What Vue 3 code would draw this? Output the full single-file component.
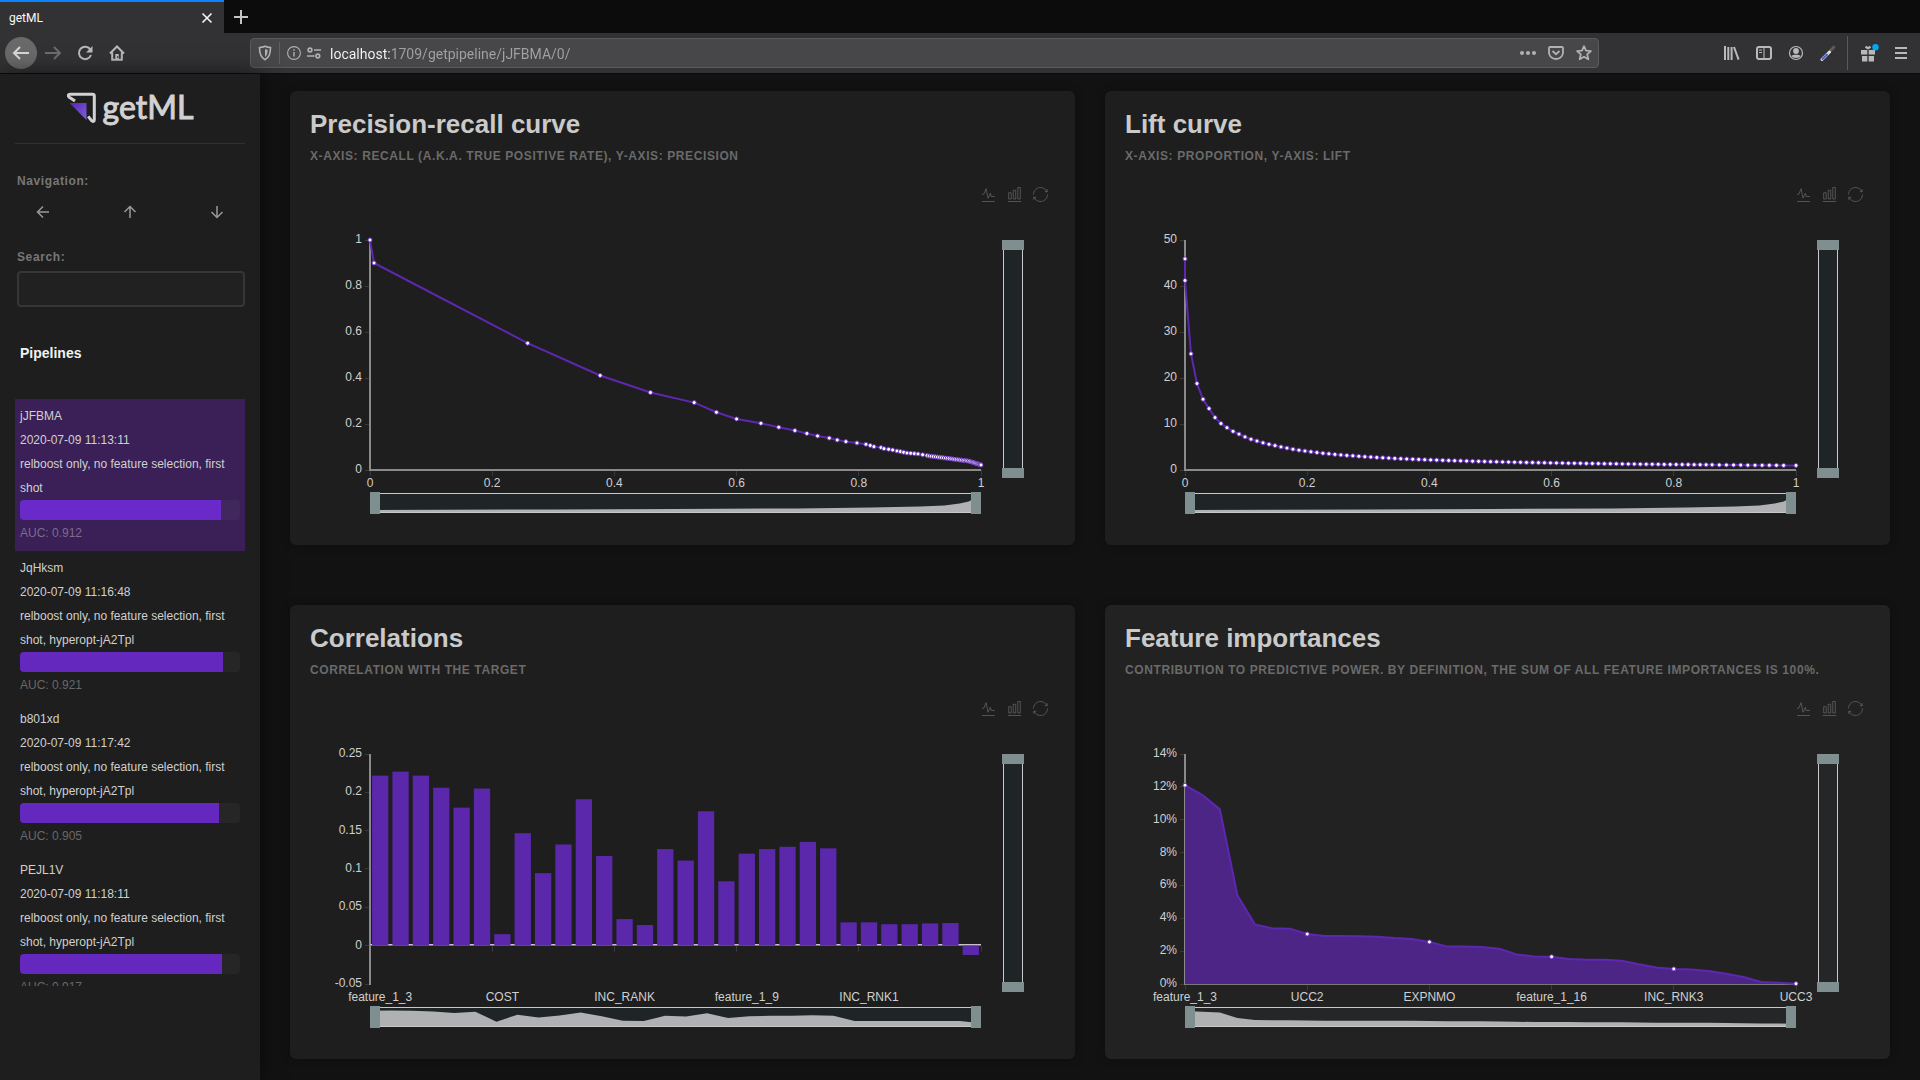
<script setup>
import { ref, computed } from 'vue'

const search = ref('')
const address = ref('localhost:1709/getpipeline/jJFBMA/0/')

const pipelines = [
  { id: 'jJFBMA', date: '2020-07-09 11:13:11', tags: 'relboost only, no feature selection, first shot', auc: 0.912 },
  { id: 'JqHksm', date: '2020-07-09 11:16:48', tags: 'relboost only, no feature selection, first shot, hyperopt-jA2Tpl', auc: 0.921 },
  { id: 'b801xd', date: '2020-07-09 11:17:42', tags: 'relboost only, no feature selection, first shot, hyperopt-jA2Tpl', auc: 0.905 },
  { id: 'PEJL1V', date: '2020-07-09 11:18:11', tags: 'relboost only, no feature selection, first shot, hyperopt-jA2Tpl', auc: 0.917 }
]
const selected = ref('jJFBMA')
const visiblePipelines = computed(() =>
  pipelines.filter(p => (p.id + p.tags).toLowerCase().includes(search.value.toLowerCase()))
)

// Plot area inside each chart's drawing
const X0 = 80
const X1 = 691
const Y0 = 38
const Y1 = 268
const sx = t => X0 + t * (X1 - X0)
const sy = (v, min, max) => Y1 - ((v - min) / (max - min)) * (Y1 - Y0)
const join = pts => pts.map(p => p[0].toFixed(2) + ',' + p[1].toFixed(2)).join(' ')
const numberTicks = [0, 0.2, 0.4, 0.6, 0.8, 1].map(v => ({ x: sx(v), label: String(v) }))

// Precision-recall
const prData = [
  [0, 1], [0.0066, 0.9], [0.258, 0.5515], [0.3767, 0.411], [0.459, 0.337], [0.5306, 0.293],
  [0.567, 0.251], [0.6, 0.222], [0.6398, 0.203], [0.669, 0.186], [0.6954, 0.1714], [0.715, 0.1589],
  [0.7325, 0.148], [0.7516, 0.1387], [0.7647, 0.1306], [0.7789, 0.1234], [0.797, 0.1176],
  [0.8117, 0.1118], [0.8188, 0.1067], [0.8248, 0.1016], [0.8363, 0.0973], [0.8412, 0.0929],
  [0.8488, 0.09], [0.8554, 0.0871], [0.8625, 0.0828], [0.868, 0.08], [0.8734, 0.077],
  [0.8789, 0.0741], [0.8849, 0.0727], [0.8909, 0.0712], [0.8969, 0.07], [0.9045, 0.0665], [0.9116, 0.063]
]
for (let i = 1; i <= 34; i++) {
  const t = i / 34
  const x = 0.9116 + 0.0884 * (1 - Math.pow(1 - t, 1.35))
  prData.push([x, 0.062 - 0.34 * (x - 0.9116) - (x > 0.98 ? 0.5 * (x - 0.98) : 0)])
}

// Lift
const liftData = [
  [0, 45.9], [0, 41.2], [0.0098, 25.25], [0.0196, 18.8], [0.0295, 15.4], [0.0393, 13.35], [0.0491, 11.4],
  [0.0589, 10.1], [0.0687, 9.2], [0.0786, 8.4], [0.0884, 7.8], [0.0982, 7.2], [0.108, 6.7],
  [0.1178, 6.3], [0.1277, 5.9], [0.1375, 5.6], [0.1473, 5.3]
]
for (let x = 0.1571; x <= 1.001; x += x < 0.86 ? 0.0098 : 0.0117) {
  liftData.push([Math.min(x, 1), 4.06 * Math.pow(x / 0.2, -0.88)])
}
liftData[liftData.length - 1][0] = 1

// Correlations
const correlations = [
  0.2218, 0.227, 0.2218, 0.206, 0.18, 0.205, 0.015, 0.1467, 0.0946, 0.132, 0.191, 0.117, 0.0347, 0.0269,
  0.126, 0.111, 0.1753, 0.084, 0.12, 0.126, 0.129, 0.1354, 0.127, 0.0304, 0.0304, 0.028, 0.028, 0.029,
  0.0295, -0.0122
]
const band = (X1 - X0) / correlations.length
const zeroY = sy(0, -0.05, 0.25)
const bars = correlations.map((v, i) => {
  const y = sy(v, -0.05, 0.25)
  return { x: X0 + i * band + band * 0.1, y: Math.min(y, zeroY), width: band * 0.8, height: Math.abs(y - zeroY) }
})

// Feature importances, in percent
const importances = [
  12.1, 11.5, 10.63, 5.4, 3.63, 3.39, 3.37, 3.04, 2.92, 2.92, 2.9, 2.87, 2.8, 2.74, 2.56, 2.29, 2.28, 2.25,
  2.15, 1.8, 1.68, 1.66, 1.52, 1.48, 1.48, 1.42, 1.2, 1.01, 0.92, 0.89, 0.79, 0.63, 0.43, 0.12, 0.08, 0.02
]
const importancePoints = importances.map((v, i) => [sx(i / 35), sy(v, 0, 14)])

const curveShadow = [
  [0, 308], [0.3, 307.5], [0.5, 307], [0.7, 306.4], [0.82, 305.6], [0.9, 304.6], [0.94, 303.4],
  [0.965, 301.6], [0.98, 299.4], [0.988, 296.6], [1, 293]
].map(([t, y]) => [sx(t), y])

const closeShadow = pts => join([[X0, 311], ...pts, [X1, 311]])

const yTicks = (values, min, max, suffix = '') =>
  values.map(v => ({ y: sy(v, min, max), label: v + suffix }))

const prPoints = prData.map(([x, y]) => [sx(x), sy(y, 0, 1)])
const liftPoints = liftData.map(([x, y]) => [sx(x), sy(y, 0, 50)])

const charts = [
  {
    key: 'pr', title: 'Precision-recall curve',
    subtitle: 'X-axis: Recall (a.k.a. true positive rate), Y-axis: Precision',
    yTicks: yTicks([0, 0.2, 0.4, 0.6, 0.8, 1], 0, 1), xTicks: numberTicks.map(t => t.x), xLabels: numberTicks,
    axisY: Y1, line: prPoints, symbols: prPoints, shadow: closeShadow(curveShadow)
  },
  {
    key: 'lift', title: 'Lift curve', subtitle: 'X-axis: Proportion, Y-axis: Lift',
    yTicks: yTicks([0, 10, 20, 30, 40, 50], 0, 50), xTicks: numberTicks.map(t => t.x), xLabels: numberTicks,
    axisY: Y1, line: liftPoints, symbols: liftPoints, shadow: closeShadow(curveShadow)
  },
  {
    key: 'corr', title: 'Correlations', subtitle: 'Correlation with the target',
    yTicks: yTicks([-0.05, 0, 0.05, 0.1, 0.15, 0.2, 0.25], -0.05, 0.25),
    xTicks: [0, 0.2, 0.4, 0.6, 0.8, 1].map(sx),
    xLabels: ['feature_1_3', 'COST', 'INC_RANK', 'feature_1_9', 'INC_RNK1'].map((label, i) => ({
      x: X0 + (i * 6 + 0.5) * band, label
    })),
    axisY: zeroY, bars, thinAxis: true,
    shadow: closeShadow(correlations.map((v, i) => [sx(i / 29), 306.5 - 53 * v]))
  },
  {
    key: 'imp', title: 'Feature importances', active: true,
    subtitle: 'Contribution to predictive power. By definition, the sum of all feature importances is 100%.',
    yTicks: yTicks([0, 2, 4, 6, 8, 10, 12, 14], 0, 14, '%'),
    xTicks: [0, 0.2, 0.4, 0.6, 0.8, 1].map(sx),
    xLabels: ['feature_1_3', 'UCC2', 'EXPNMO', 'feature_1_16', 'INC_RNK3', 'UCC3'].map((label, i) => ({
      x: sx(i / 5), label
    })),
    axisY: Y1, line: importancePoints, area: join([[X0, Y1], ...importancePoints, [X1, Y1]]),
    symbols: importancePoints.filter((p, i) => i % 7 === 0), thinAxis: true,
    shadow: closeShadow(importances.map((v, i) => [sx(i / 35), 307.7 - 1.05 * v]))
  }
]

const tools = [
  { name: 'Line', path: 'M4.1,28.9h7.1l9.3-22l7.4,38l9.7-19.7l3,12.8h14.9M4.1,58h51.4' },
  { name: 'Bars', path: 'M6.7,22.9h10V48h-10V22.9zM24.9,13h10v35h-10V13zM43.2,2h10v46h-10V2zM3.1,58h53.7' },
  {
    name: 'Restore',
    path: 'M47,18.9h9.8V8.7M56.3,20.1C52.1,9,40.5,0.6,26.8,2.1C12.6,3.7,1.6,16.2,2.1,30.6M13,41.1H3.1v10.2M3.7,39.9c4.2,11.1,15.8,19.5,29.5,18c14.2-1.6,25.2-14.1,24.7-28.5'
  }
]
</script>

<template>
  <div class="window">
    <header class="browser">
      <div class="tabs">
        <div class="tab">
          <span>getML</span>
          <button class="plain close" aria-label="Close tab">
            <svg width="12" height="12" viewBox="0 0 12 12"><path d="M1.5 1.5l9 9M10.5 1.5l-9 9" stroke="#f5f5f5" stroke-width="1.6" fill="none" /></svg>
          </button>
        </div>
        <button class="plain new-tab" aria-label="New tab">
          <svg width="16" height="16" viewBox="0 0 16 16"><path d="M8 1v14M1 8h14" stroke="#c4c4c4" stroke-width="2" fill="none" /></svg>
        </button>
      </div>
      <div class="toolbar">
        <nav class="group">
          <button class="plain tool back" aria-label="Back">
            <svg width="18" height="18" viewBox="0 0 18 18"><path d="M17 9H2M8 3L2 9l6 6" class="stroke" stroke-width="2" /></svg>
          </button>
          <button class="plain tool dim" aria-label="Forward">
            <svg width="18" height="18" viewBox="0 0 18 18"><path d="M1 9h15M10 3l6 6-6 6" class="stroke" stroke-width="2" /></svg>
          </button>
          <button class="plain tool" aria-label="Reload">
            <svg width="16" height="16" viewBox="0 0 16 16"><path d="M13.4 4.6A6.2 6.2 0 1 0 14 10" class="stroke" stroke-width="2" /><path d="M15.5 1v6.5H9z" class="fill" /></svg>
          </button>
          <button class="plain tool" aria-label="Home">
            <svg width="16" height="16" viewBox="0 0 16 16"><path d="M1 8.5L8 1.5l7 7M3.2 7.5v7.3h9.6V7.5" class="stroke" stroke-width="2" /><path d="M6.3 9h3.4v5.5H6.3z" class="fill" /><path d="M8.2 11h.9v2h-.9z" fill="#323234" /></svg>
          </button>
        </nav>
        <div class="url">
          <svg width="14" height="16" viewBox="0 0 14 16"><path d="M7 1.3c2 1 4 1.2 5.5 1.2 0 5.5-.8 9.8-5.5 12.2C2.3 12.3 1.5 8 1.5 2.5 3 2.5 5 2.3 7 1.3z" class="stroke" stroke-width="1.6" /><path d="M7 4v8c2-1.5 2.6-4 2.7-7.3C8.700 4.600 7.800 4.400 7 4z" class="fill" /></svg>
          <i class="rule"></i>
          <svg width="14" height="14" viewBox="0 0 14 14"><circle cx="7" cy="7" r="6.4" class="stroke" stroke-width="1.1" /><path d="M7 6v4.500M7 3.300v1.500" class="stroke" stroke-width="1.4" /></svg>
          <svg class="perm" width="14" height="12" viewBox="0 0 14 12"><g class="stroke" stroke-width="1.6"><circle cx="3" cy="3" r="1.9" /><path d="M7 3h7M0 9h7.500" /><circle cx="10.8" cy="9" r="1.9" /></g></svg>
          <input v-model="address" class="address" type="text" aria-label="Address" spellcheck="false" />
          <button class="plain page" aria-label="Page actions">
            <svg width="16" height="4" viewBox="0 0 16 4"><g class="fill"><circle cx="2" cy="2" r="2" /><circle cx="8" cy="2" r="2" /><circle cx="14" cy="2" r="2" /></g></svg>
          </button>
          <button class="plain page" aria-label="Save to Pocket">
            <svg width="16" height="14" viewBox="0 0 16 14"><path d="M2 1h12a1 1 0 0 1 1 1v4.5a7 6.5 0 0 1-14 0V2a1 1 0 0 1 1-1zM4.5 5L8 8.2 11.5 5" class="stroke" stroke-width="1.8" /></svg>
          </button>
          <button class="plain page" aria-label="Bookmark">
            <svg width="16" height="16" viewBox="0 0 16 16"><path d="M8 1.2l2 4.400 4.900.5-3.700 3.300 1.100 4.900L8 11.800l-4.300 2.500 1.100-4.900L1.100 6.100 6 5.600z" class="stroke" stroke-width="1.8" stroke-linejoin="round" /></svg>
          </button>
        </div>
        <div class="group">
          <button class="plain tool" aria-label="Library">
            <svg width="16" height="14" viewBox="0 0 16 14"><path d="M1 0v14M4.300 1v13M7.600 1v13M10 1l4.600 12.700" class="stroke" stroke-width="2" /></svg>
          </button>
          <button class="plain tool" aria-label="Sidebars">
            <svg width="16" height="14" viewBox="0 0 16 14"><rect x="1" y="1" width="14" height="12" rx="2" class="stroke" stroke-width="2" /><path d="M8 1v12M3 4h3M3 6.500h3" class="stroke" stroke-width="1.1" /></svg>
          </button>
          <button class="plain tool" aria-label="Account">
            <svg width="16" height="16" viewBox="0 0 16 16"><circle cx="8" cy="8" r="6.5" class="stroke" stroke-width="1.2" /><circle cx="8" cy="6" r="2.9" class="fill" /><path d="M3.400 11c1-1.800 8.200-1.800 9.200 0-1 2.500-8.200 2.500-9.200 0z" class="fill" /></svg>
          </button>
          <button class="plain tool" aria-label="Color picker">
            <svg width="16" height="16" viewBox="0 0 16 16"><path d="M10 6l3.800-3.800" stroke="#5c5c5c" stroke-width="3" stroke-linecap="round" /><path d="M2 14.500L9.500 7" stroke="#ddd" stroke-width="3" stroke-linecap="round" /><path d="M2.500 14L7 9.500" stroke="#3f62d8" stroke-width="2" stroke-linecap="round" /></svg>
          </button>
          <i class="divider"></i>
          <button class="plain tool" aria-label="What's new">
            <svg width="20" height="18" viewBox="0 0 20 18"><path d="M2 6h6.300v4.500H2zM9.700 6H16v4.500H9.700zM3 12h5.300v5.500H3zM9.700 12H15v5.500H9.700z" class="fill" /><path d="M6.500 2.800L9 4.300l2.500-1.500" class="stroke" stroke-width="2.2" /><circle cx="16.500" cy="3.3" r="3.2" fill="#00a8f5" /></svg>
          </button>
          <button class="plain tool" aria-label="Menu">
            <svg width="12" height="12" viewBox="0 0 12 12"><path d="M0 1h12M0 6h12M0 11h12" class="stroke" stroke-width="2" /></svg>
          </button>
        </div>
      </div>
    </header>

    <div class="body">
      <aside class="sidebar">
        <a class="logo" href="#" aria-label="getML home">
          <svg width="30" height="32" viewBox="0 0 30 32">
            <defs>
              <linearGradient id="mark" x1="0" y1="0" x2="1" y2="1">
                <stop offset="0" stop-color="#5a22b4" />
                <stop offset="1" stop-color="#7d62dc" />
              </linearGradient>
            </defs>
            <path d="M8 9L2.300 5.200C.6 4 1 2.300 3 2.300h22.500a1.800 1.800 0 0 1 1.800 1.800v23.600c0 1.900-1.500 2.300-2.800.9l-3.300-4.200" fill="none" stroke="#d2d2d2" stroke-width="3" />
            <path d="M2.500 11H19.500V28z" fill="url(#mark)" />
          </svg>
          <span class="wordmark">getML</span>
        </a>
        <hr class="line" />
        <p class="label nav-label">Navigation:</p>
        <div class="arrows">
          <button class="plain arrow" aria-label="Back"><svg width="14" height="14" viewBox="0 0 14 14"><path d="M13 7H1.5M7 1.5L1.5 7 7 12.5" /></svg></button>
          <button class="plain arrow" aria-label="Up"><svg width="14" height="14" viewBox="0 0 14 14"><path d="M7 13V1.5M1.5 7L7 1.5 12.5 7" /></svg></button>
          <button class="plain arrow" aria-label="Down"><svg width="14" height="14" viewBox="0 0 14 14"><path d="M7 1v11.5M1.5 7L7 12.5 12.5 7" /></svg></button>
        </div>
        <label class="label search-label" for="search">Search:</label>
        <input id="search" v-model="search" class="search" type="text" />
        <h3 class="list-title">Pipelines</h3>
        <ul class="list">
          <li
            v-for="p in visiblePipelines"
            :key="p.id"
            class="item"
            :class="{ selected: p.id === selected }"
            @click="selected = p.id"
          >
            <p>{{ p.id }}</p>
            <p>{{ p.date }}</p>
            <p>{{ p.tags }}</p>
            <div class="meter"><div class="fillbar" :style="{ width: p.auc * 100 + '%' }"></div></div>
            <p class="auc">AUC: {{ p.auc }}</p>
          </li>
        </ul>
      </aside>

      <main class="main">
        <section v-for="c in charts" :key="c.key" class="card" :class="{ active: c.active }">
          <h2>{{ c.title }}</h2>
          <p class="subtitle">{{ c.subtitle }}</p>
          <div class="toolbox">
            <button v-for="t in tools" :key="t.name" class="plain" :aria-label="t.name">
              <svg width="15" height="15" viewBox="0 0 60 60"><path :d="t.path" /></svg>
            </button>
          </div>
          <svg class="chart" viewBox="0 0 785 343">
            <g class="ticks">
              <path v-for="t in c.yTicks" :key="t.label" :d="`M75 ${Math.floor(t.y) + 0.5}H80`" />
              <path v-for="x in c.xTicks" :key="x" :d="`M${Math.floor(x) + 0.5} ${c.axisY}v6`" />
            </g>
            <path class="axis" d="M80 38V269" />
            <template v-if="c.thinAxis">
              <path v-if="c.bars" class="axis-light" :d="`M80 ${Math.floor(c.axisY) - 0.5}H691`" />
              <path class="axis-dim" :d="`M80 ${Math.floor(c.axisY) + 0.5}H691`" />
            </template>
            <path v-else class="axis" :d="`M80 ${c.axisY}H691`" />

            <g v-if="c.bars" class="bars">
              <rect v-for="(b, i) in c.bars" :key="i" :x="b.x" :y="b.y" :width="b.width" :height="b.height" />
            </g>
            <polygon v-if="c.area" class="area" :points="c.area" />
            <polyline v-if="c.line" class="curve" :points="join(c.line)" />
            <g v-if="c.symbols" class="symbols">
              <circle v-for="(p, i) in c.symbols" :key="i" :cx="p[0]" :cy="p[1]" r="2" />
            </g>

            <g class="axis-text">
              <text v-for="t in c.yTicks" :key="t.label" x="72" :y="t.y + 3" text-anchor="end">{{ t.label }}</text>
              <text v-for="t in c.xLabels" :key="t.label" :x="t.x" y="285" text-anchor="middle">{{ t.label }}</text>
            </g>

            <rect class="track" x="80" y="291" width="611" height="20" />
            <polygon class="shadow" :points="c.shadow" />
            <path class="track-line" d="M80 291.5H691M80 310.5H691" />
            <rect class="handle" x="80" y="290" width="10" height="22" />
            <rect class="handle" x="681" y="290" width="10" height="22" />

            <rect class="track" x="713" y="38" width="20" height="238" />
            <path class="track-line" d="M713.5 38V276M732.5 38V276" />
            <rect class="handle" x="712" y="38" width="22" height="10" />
            <rect class="handle" x="712" y="266" width="22" height="10" />
          </svg>
        </section>
      </main>
    </div>
  </div>
</template>

<style>
body {
  background: #121212;
  font-family: "Liberation Sans", Arial, sans-serif;
}
</style>

<style scoped>
.window {
  display: flex;
  flex-direction: column;
  height: 100vh;
  overflow: hidden;
  color: #d0d0d0;
  font-size: 12px;
}
.plain {
  display: flex;
  align-items: center;
  justify-content: center;
  padding: 0;
  border: 0;
  background: none;
  color: inherit;
}
p,
h2,
h3,
ul {
  margin: 0;
  padding: 0;
}
.stroke {
  fill: none;
  stroke: currentColor;
}
.fill {
  fill: currentColor;
}

.browser {
  flex: none;
}
.tabs {
  display: flex;
  height: 33px;
  background: #0c0c0d;
}
.tab {
  display: flex;
  align-items: center;
  justify-content: space-between;
  box-sizing: border-box;
  width: 224px;
  padding: 0 11px 0 9px;
  border-top: 2px solid #0a84ff;
  background: #323234;
  color: #f9f9fa;
  font-family: Roboto, sans-serif;
}
.new-tab {
  width: 34px;
}
.toolbar {
  display: flex;
  align-items: center;
  gap: 117px;
  box-sizing: border-box;
  height: 41px;
  padding: 0 3px 0 5px;
  border-bottom: 1px solid #0c0c0d;
  background: #323234;
  color: #b9b9ba;
}
.group {
  display: flex;
  align-items: center;
}
.tool {
  width: 32px;
  height: 32px;
}
.tool.back {
  border-radius: 50%;
  background: #69696a;
  color: #d6d6d6;
}
.tool.dim {
  color: #6c6c6d;
}
.divider {
  width: 1px;
  height: 34px;
  margin: 0 5px 0 3px;
  background: #59595b;
}
.url {
  display: flex;
  flex: 1;
  align-items: center;
  box-sizing: border-box;
  height: 30px;
  padding: 0 0 0 7px;
  border: 1px solid #5b5b5d;
  border-radius: 4px;
  background: #474749;
  color: #b1b1b3;
}
.rule {
  width: 1px;
  height: 22px;
  margin: 0 7px;
  background: #606062;
}
.perm {
  margin: 0 9px 0 6px;
}
.address {
  flex: 1;
  min-width: 0;
  padding: 1px 0 0;
  border: 0;
  outline: 0;
  background: linear-gradient(90deg, #f9f9fa 60px, #a2a2a4 60px);
  background-clip: text;
  color: #a2a2a4;
  -webkit-text-fill-color: transparent;
  font: 14px Roboto, sans-serif;
}
.page {
  width: 28px;
  height: 28px;
}

.body {
  display: flex;
  flex: 1;
  min-height: 0;
}
.sidebar {
  display: flex;
  flex: none;
  flex-direction: column;
  box-sizing: border-box;
  width: 260px;
  padding: 17px 15px 94px;
  background: #1e1e1e;
  box-shadow: 0 0 20px rgba(0, 0, 0, 0.6);
}
.logo {
  display: flex;
  align-items: flex-start;
  justify-content: center;
  gap: 6px;
  height: 34px;
  padding-top: 1px;
  box-sizing: border-box;
  color: #d2d2d2;
  font-family: Lato, sans-serif;
  font-size: 32px;
  line-height: 30px;
  text-decoration: none;
}
.wordmark {
  -webkit-text-stroke: 1px #d2d2d2;
}
.line {
  width: 100%;
  height: 1px;
  margin: 18px 0 0;
  border: 0;
  background: #303030;
}
.label {
  padding-left: 2px;
  color: #777;
  font-weight: bold;
  letter-spacing: 0.05em;
  line-height: 16px;
}
.nav-label {
  margin-top: 29px;
}
.arrows {
  display: flex;
  justify-content: space-between;
  margin-top: 11px;
  padding: 0 16px;
}
.arrow {
  width: 24px;
  height: 24px;
}
.arrow path {
  fill: none;
  stroke: #999;
  stroke-width: 1.5;
}
.search-label {
  margin-top: 25px;
}
.search {
  box-sizing: border-box;
  height: 36px;
  margin: 6px 0 0 2px;
  border: 2px solid #363636;
  border-radius: 4px;
  outline: 0;
  background: #212121;
  color: #d0d0d0;
}
.list-title {
  margin: 36px 0;
  padding-left: 5px;
  color: #f2f2f2;
  font-size: 14px;
  line-height: 20px;
}
.list {
  flex: 1;
  min-height: 0;
  overflow: hidden;
  list-style: none;
  line-height: 24px;
}
.item {
  padding: 5px 5px 4px;
}
.item.selected {
  padding-bottom: 5px;
  background: #3a2056;
}
.meter {
  height: 20px;
  overflow: hidden;
  border-radius: 4px;
  background: rgba(255, 255, 255, 0.04);
}
.fillbar {
  height: 100%;
  background: #6528bf;
}
.selected .fillbar {
  background: #6a29c9;
}
.auc {
  color: #686868;
  line-height: 26px;
}
.selected .auc {
  color: #7d6b90;
}

.main {
  display: grid;
  flex: 1;
  grid-template-columns: 1fr 1fr;
  align-content: start;
  gap: 60px 30px;
  padding: 17px 30px 21px;
}
.card {
  min-width: 0;
  padding-top: 17px;
  border-radius: 6px;
  background: #1e1e1e;
  box-shadow: 0 0 10px rgba(0, 0, 0, 0.25);
}
.card.active {
  background: #222;
}
h2 {
  padding: 0 20px;
  color: #cacaca;
  font-size: 26px;
  line-height: 32px;
}
.subtitle {
  margin-top: 8px;
  padding: 0 20px;
  color: #6a6a6a;
  font-weight: bold;
  letter-spacing: 0.05em;
  line-height: 16px;
  text-transform: uppercase;
}
.toolbox {
  display: flex;
  justify-content: flex-end;
  gap: 11px;
  margin-top: 23px;
  padding-right: 27px;
}
.toolbox path {
  fill: none;
  stroke: #666;
  stroke-width: 3;
}
.chart {
  display: block;
  width: 100%;
}
.ticks {
  fill: none;
  stroke: #3a3a3a;
}
.axis {
  fill: none;
  stroke: #8a8a8a;
  stroke-width: 2;
}
.axis-light {
  stroke: #c4c4c4;
}
.axis-dim {
  stroke: #777;
}
.bars {
  fill: #5b27ab;
}
.area {
  fill: #4d2586;
}
.curve {
  fill: none;
  stroke: #5e27b0;
  stroke-width: 2;
  stroke-linejoin: bevel;
}
.symbols {
  fill: #fff;
  stroke: #6a35bd;
  stroke-width: 1;
}
.axis-text {
  fill: #d0d0d0;
  font-size: 12px;
}
.track {
  fill: #1f2427;
}
.active .track {
  fill: #242628;
}
.shadow {
  fill: #afb1b3;
}
.track-line {
  fill: none;
  stroke: #c9c9c9;
}
.handle {
  fill: #7f8e8f;
}
</style>
